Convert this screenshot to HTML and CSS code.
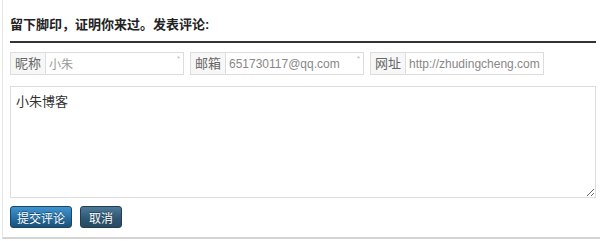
FILE: index.html
```html
<!DOCTYPE html>
<html lang="zh">
<head>
    <meta charset="UTF-8">
    <meta name="viewport" content="width=device-width, initial-scale=1.0">
    <title>发表评论</title>
    <link rel="stylesheet" href="styles.css">
</head>
<body>
    <div class="comment-box">
        <h3 class="comment-title">留下脚印，证明你来过。发表评论:</h3>
        <form class="comment-form" onsubmit="return false">
            <div class="fields">
                <div class="field">
                    <span class="addon">昵称</span>
                    <input type="text" class="name" value="小朱">
                    <span class="req">*</span>
                </div>
                <div class="field">
                    <span class="addon">邮箱</span>
                    <input type="text" value="651730117@qq.com">
                    <span class="req">*</span>
                </div>
                <div class="field">
                    <span class="addon">网址</span>
                    <input type="text" value="http://zhudingcheng.com/zhu">
                </div>
            </div>
            <textarea class="content">小朱博客</textarea>
            <div class="actions">
                <button class="btn btn-submit">提交评论</button>
                <button class="btn btn-cancel" type="button">取消</button>
            </div>
        </form>
    </div>
</body>
</html>
```

FILE: styles.css
```css
body {
    margin: 0;
    background-color: #fff;
    font-family: "Liberation Sans", Arial, "Noto Sans CJK SC", sans-serif;
    color: #333;
}
.comment-box {
    margin-left: 2px;
    padding: 16px 4px 9px 7px;
    border-left: 1px solid #e6e6e6;
    border-bottom: 2px solid #d4d4d4;
}
.comment-title {
    margin: 0;
    font-size: 13px;
    line-height: 18px;
    font-weight: bold;
    color: #222;
    padding-bottom: 7px;
    border-bottom: 2px solid #333;
}
.fields {
    display: flex;
    gap: 6px;
    margin-top: 9px;
}
.field {
    position: relative;
    display: flex;
    height: 23px;
}
.addon {
    width: 34px;
    border: 1px solid #ddd;
    border-right: none;
    background-color: #f7f7f7;
    color: #666;
    font-size: 13px;
    line-height: 21px;
    text-align: center;
}
.field input {
    width: 139px;
    box-sizing: border-box;
    height: 23px;
    margin: 0;
    padding: 0 3px;
    border: 1px solid #ddd;
    font-family: inherit;
    font-size: 12px;
    color: #888;
    outline: none;
}
.field input.name {
    color: #999;
}
.req {
    position: absolute;
    top: 2px;
    right: 4px;
    font-size: 8px;
    color: #bbb;
}
.content {
    display: block;
    box-sizing: border-box;
    width: 586px;
    height: 112px;
    margin: 11px 0 0;
    padding: 4px 5px;
    border: 1px solid #ddd;
    font-family: inherit;
    font-size: 13px;
    color: #333;
    resize: both;
    outline: none;
}
.actions {
    display: flex;
    gap: 8px;
    margin-top: 8px;
}
.btn {
    height: 22px;
    padding: 0 6px;
    border: 1px solid #1c4563;
    border-radius: 3px;
    color: #fff;
    font-family: inherit;
    font-size: 12px;
    text-shadow: 0 -1px 0 rgba(0,0,0,0.4);
    cursor: pointer;
}
.btn-submit {
    background: linear-gradient(#4094d0, #2670a6 55%, #1d5078);
}
.btn-cancel {
    padding: 0 8px;
    border-color: #233c4e;
    background: linear-gradient(#4b7a98, #2f5874 55%, #274a61);
}
```
